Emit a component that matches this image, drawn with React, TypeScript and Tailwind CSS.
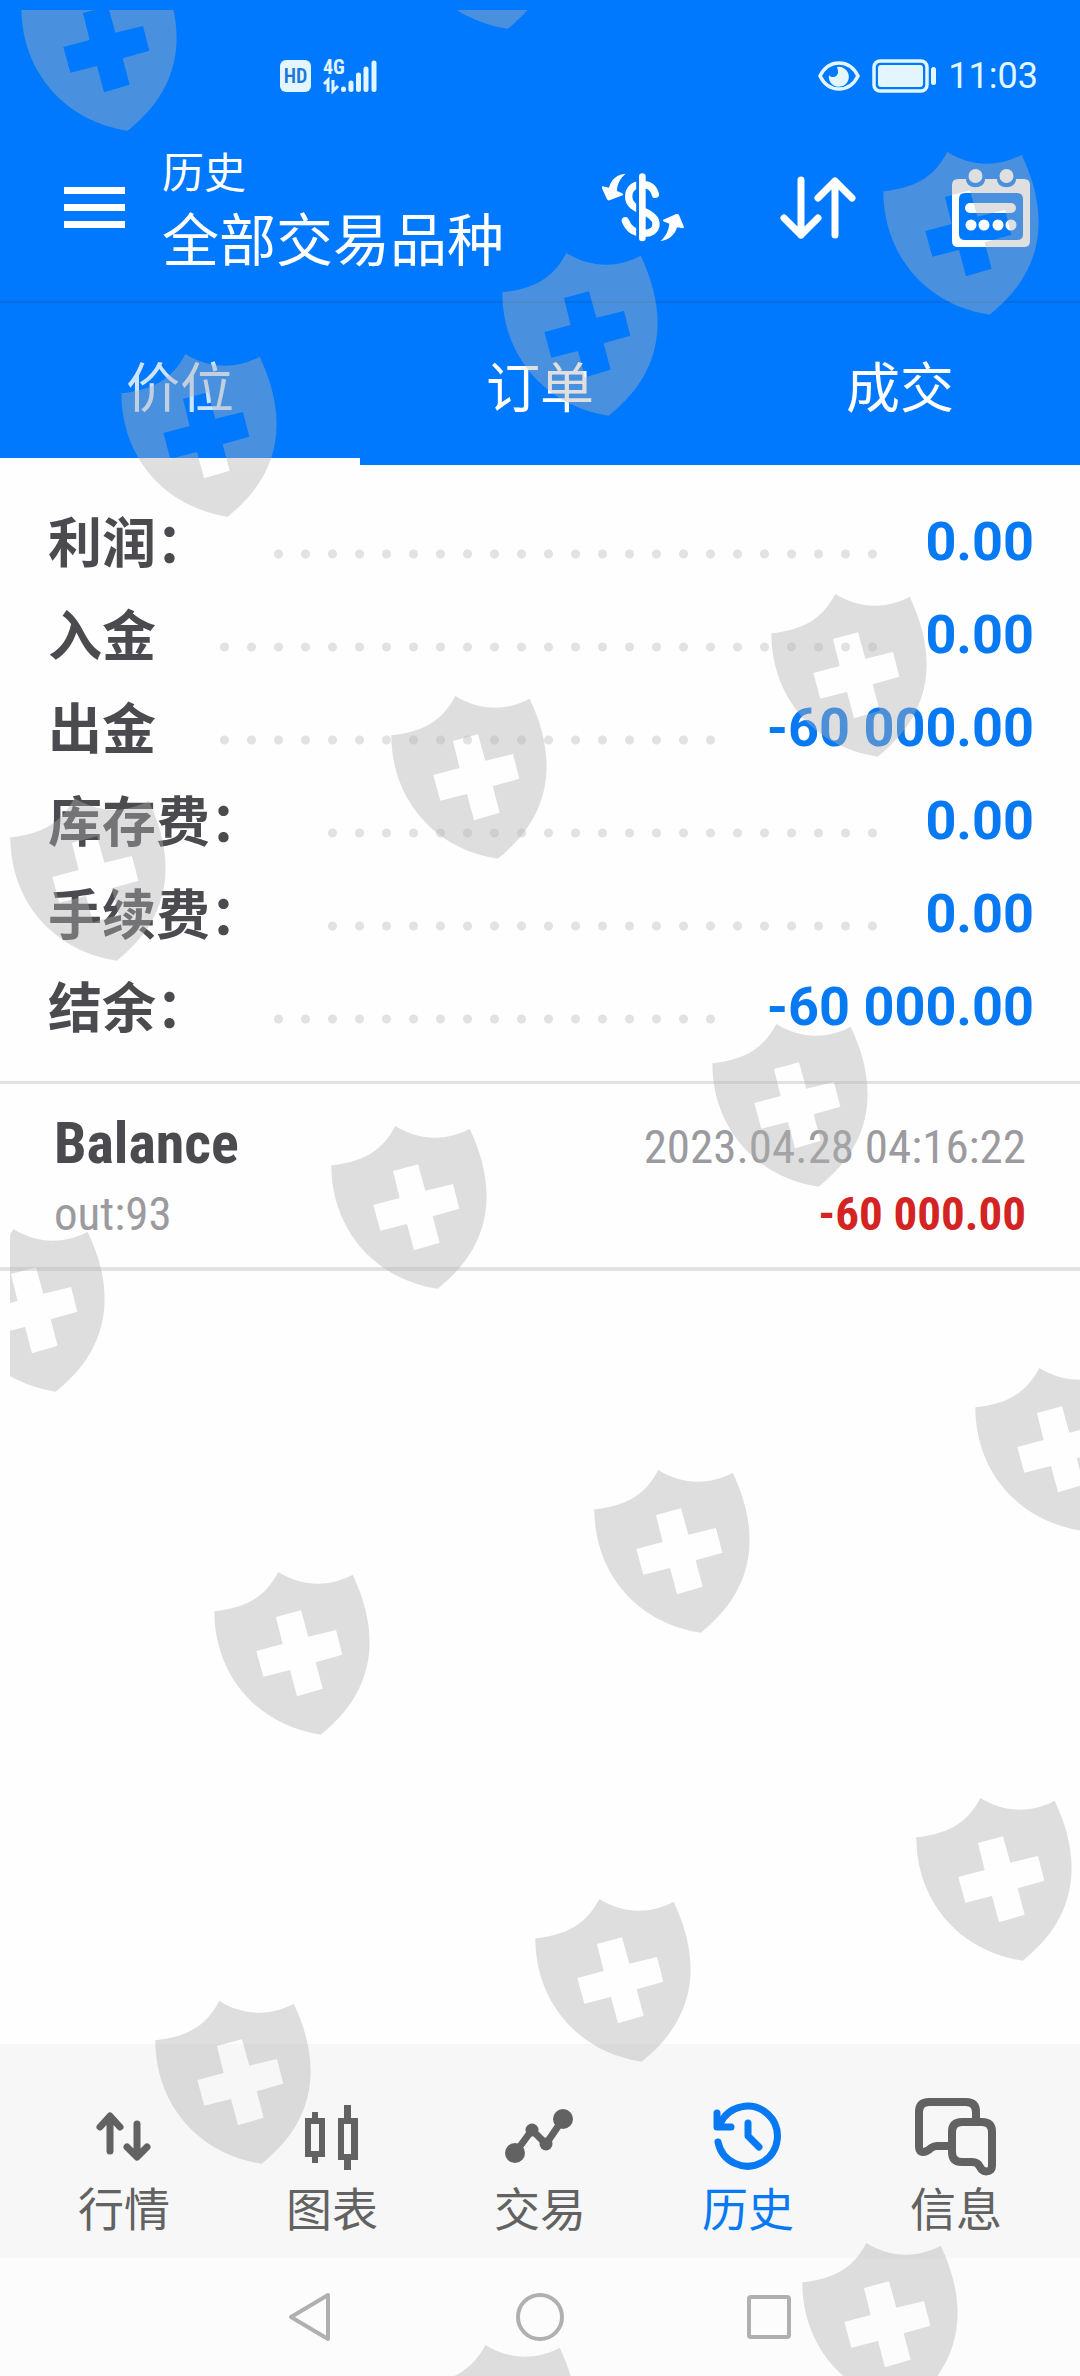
import type { ReactNode } from "react";

const summary = [
  { label: "利润：", value: "0.00" },
  { label: "入金", value: "0.00" },
  { label: "出金", value: "-60 000.00" },
  { label: "库存费：", value: "0.00" },
  { label: "手续费：", value: "0.00" },
  { label: "结余：", value: "-60 000.00" },
];

const shields = [
  [21, -32], [401, -134], [883, 152], [502, 253], [121, 354],
  [771, 594], [391, 696], [10, 798], [712, 1024], [331, 1126],
  [-51, 1229], [975, 1368], [594, 1470], [214, 1572], [916, 1798],
  [535, 1899], [155, 2001], [802, 2243], [421, 2345],
];

function StatusBar() {
  return (
    <div className="flex h-[112px] items-center pt-10 pr-[42px] pl-[280px] text-[#e3f6ff]">
      <svg width="104" height="48" viewBox="0 -6 104 48" aria-label="HD 4G" role="img">
        <rect x="0" y="2" width="31" height="32" rx="6" fill="currentColor" />
        <text x="15.5" y="25" fontFamily="Roboto Condensed, sans-serif" fontWeight="600" fontSize="20" textAnchor="middle" fill="#1a78dc">HD</text>
        <text x="43" y="16" fontFamily="Roboto Condensed, sans-serif" fontWeight="700" fontSize="20" fill="currentColor">4G</text>
        <path d="M48 34V22L44 26M53 22V33L58 28" stroke="currentColor" strokeWidth="3" fill="none" />
        <g stroke="currentColor" strokeWidth="5" strokeLinecap="round">
          <path d="M63.5 31V31.5M71 25V31.5M78.5 17V31.5M86 11V31.5M94 5V31.5" />
        </g>
      </svg>
      <div className="ml-auto flex items-center gap-3">
        <svg width="42" height="30" viewBox="0 0 42 30" aria-hidden="true">
          <path d="M2 15C6 7 13 2 21 2S36 7 40 15C36 23 29 28 21 28S6 23 2 15Z" fill="none" stroke="currentColor" strokeWidth="3.5" />
          <path d="M19 6A10 10 0 1 1 11 14C13 18 21 16 20 10C20 8 19 7 19 6Z" fill="currentColor" />
        </svg>
        <svg width="64" height="34" viewBox="0 0 64 34" aria-hidden="true">
          <rect x="2" y="2" width="53" height="30" rx="6" fill="none" stroke="currentColor" strokeWidth="3.5" />
          <rect x="6" y="6" width="45" height="22" rx="3" fill="currentColor" />
          <rect x="59" y="8" width="5" height="18" rx="2.5" fill="currentColor" />
        </svg>
        <span className="text-[36px] leading-[40px]">11:03</span>
      </div>
    </div>
  );
}

function DollarIcon() {
  return (
    <svg width="82" height="70" viewBox="21 27 246 210" aria-hidden="true">
      <path d="M181 91C176 70 160 61 140 61C114 61 101 78 101 98C101 122 122 132 142 141C168 151 183 162 183 180C183 200 166 210 142 208C118 206 100 194 91 170" fill="none" stroke="currentColor" strokeWidth="22" strokeLinecap="round" />
      <path d="M128 40V226" stroke="#0079ff" strokeWidth="9" />
      <path d="M142 38V222" stroke="currentColor" strokeWidth="20" strokeLinecap="round" />
      <path d="M92 29C66 31 48 46 42 71L23 67C20 67 20 70 21 73L36 106C38 110 42 110 46 108L83 94C86 92 84 89 80 87L66 81C66 60 76 42 92 29Z" fill="currentColor" />
      <path d="M196 231C222 229 240 212 246 190L264 193C267 193 267 190 266 187L252 153C250 149 246 149 242 151L205 167C202 169 204 171 208 173L223 179C221 200 212 218 196 231Z" fill="currentColor" />
    </svg>
  );
}

function SortIcon() {
  return (
    <svg width="76" height="64" viewBox="0 0 76 64" fill="none" stroke="currentColor" strokeWidth="7" strokeLinecap="round" strokeLinejoin="round" aria-hidden="true">
      <path d="M21 4V59M4 42L21 59L38 42M55 59V5M38 22L55 5L72 22" />
    </svg>
  );
}

function CalendarIcon() {
  return (
    <svg width="78" height="80" viewBox="0 0 78 80" fill="currentColor" aria-hidden="true">
      <path fillRule="evenodd" d="M6 11H14C14 22 33 22 33 11H45C45 22 64 22 64 11H72Q78 11 78 17V73Q78 79 72 79H6Q0 79 0 73V17Q0 11 6 11ZM13 25Q7 25 7 31V66Q7 72 13 72H65Q71 72 71 66V31Q71 25 65 25Z" />
      <circle cx="23.5" cy="8" r="7" />
      <circle cx="54.5" cy="8" r="7" />
      <rect x="13" y="35" width="51" height="10" rx="5" />
      <circle cx="19" cy="57" r="5.5" />
      <circle cx="32" cy="57" r="5.5" />
      <circle cx="46" cy="57" r="5.5" />
      <circle cx="59" cy="57" r="5.5" />
    </svg>
  );
}

function NavIcon({ children }: { children: ReactNode }) {
  return (
    <svg width="84" height="84" viewBox="0 0 84 84" fill="none" stroke="currentColor" strokeWidth="7" strokeLinecap="round" strokeLinejoin="round" aria-hidden="true">
      {children}
    </svg>
  );
}

const navItems = [
  {
    label: "行情",
    icon: <path d="M28 23V57M18 33L28 22L38 33M55 30V62M45 53L55 63L65 53" />,
  },
  {
    label: "图表",
    icon: (
      <g fill="currentColor" stroke="none" fillRule="evenodd">
        <path d="M22 18H28V24H35V63H28V69H22V63H15V24H22ZM21 30V57H29V30Z" />
        <path d="M54 11H61V24H68V66H61V76H54V66H48V24H54ZM54 30V60H61V30Z" />
      </g>
    ),
  },
  {
    label: "交易",
    icon: (
      <>
        <path d="M17 59L34 36L48 50L65 25" />
        <g fill="currentColor" stroke="none">
          <circle cx="17" cy="59" r="10" />
          <circle cx="34" cy="36" r="6.5" />
          <circle cx="48" cy="50" r="6.5" />
          <circle cx="65" cy="25" r="10" />
        </g>
      </>
    ),
  },
  {
    label: "历史",
    active: true,
    icon: (
      <>
        <path d="M12 48A30 30 0 1 0 14 30" />
        <path d="M11 19V33H25" />
        <path d="M42 29V42L53 53" />
      </>
    ),
  },
  {
    label: "信息",
    icon: (
      <g strokeWidth="8">
        <path d="M62 26V18Q62 8 52 8H15Q5 8 5 18V53C5 61 13 58 17 54Q20 52 23 52H34" />
        <path d="M48 28H68Q78 28 78 38V72C78 79 69 79 66 73Q64 68 58 68H48Q38 68 38 58V38Q38 28 48 28Z" />
      </g>
    ),
  },
];

function Shields() {
  return (
    <div className="pointer-events-none absolute top-[10px] right-0 bottom-0 left-[10px] overflow-hidden" aria-hidden="true">
      {shields.map(([x, y]) => (
        <svg key={`${x},${y}`} className="absolute h-[163px] w-[156px]" style={{ left: x - 10, top: y - 10 }} viewBox="0 0 466 489" fill="#b2b2b2" fillOpacity="0.41">
          <path fillRule="evenodd" d="M0 118C90 108 150 80 192 0C260 42 340 48 415 8C490 165 500 345 319 488C130 460 0 310 0 118ZM185 135L205 216L126 237L147 314L227 294L248 373L325 350L304 271L384 248L365 174L282 194L260 115Z" />
        </svg>
      ))}
    </div>
  );
}

export default function App() {
  return (
    <div lang="zh-CN" className="relative flex min-h-screen flex-col overflow-hidden bg-[#fefefe] font-[Roboto,'Noto_Sans_CJK_SC',sans-serif]">
      <header className="bg-[#0079ff] text-white">
        <StatusBar />
        <div className="flex h-[189px] items-center pt-[2px] pr-[50px] pl-16">
          <button type="button" aria-label="菜单" className="flex w-[61px] flex-col gap-[10px]">
            <span className="h-[7px] bg-white" />
            <span className="h-[7px] bg-white" />
            <span className="h-[7px] bg-white" />
          </button>
          <div className="ml-[37px] pt-1">
            <h1 className="text-[42px] leading-[64px]">历史</h1>
            <p className="text-[57px] leading-[72px]">全部交易品种</p>
          </div>
          <div className="ml-auto flex items-center gap-24">
            <button type="button" aria-label="货币"><DollarIcon /></button>
            <button type="button" aria-label="排序"><SortIcon /></button>
            <button type="button" aria-label="日期"><CalendarIcon /></button>
          </div>
        </div>
        <div role="tablist" className="flex h-[164px] border-t-2 border-[#066ee0] text-[54px]">
          <button type="button" role="tab" aria-selected="true" className="flex-1 border-b-[7px] border-white pt-[17px] text-white/80">价位</button>
          <button type="button" role="tab" aria-selected="false" className="flex-1 pt-[10px]">订单</button>
          <button type="button" role="tab" aria-selected="false" className="flex-1 pt-[10px]">成交</button>
        </div>
      </header>

      <main className="flex-1">
        <dl className="border-b-[3px] border-[#e2e2e2] pt-[30px] pr-[46px] pb-7 pl-12">
          {summary.map((row) => (
            <div key={row.label} className="flex h-[93px] items-center text-[54px] leading-[80px]">
              <dt className="pt-[6px] font-bold text-[#4a4a4f]">{row.label}</dt>
              <dd className="flex flex-1 items-center">
                <span className="mt-6 mr-[38px] ml-[55px] h-[10px] flex-1 bg-[radial-gradient(circle,#e2e2e2_4px,transparent_5px)] bg-[length:27px_10px] bg-repeat-x" />
                <span className="font-bold text-[#0779f2]">{row.value}</span>
              </dd>
            </div>
          ))}
        </dl>

        <article className="border-b-4 border-[#e2e2e2] pt-6 pr-[54px] pb-[21px] pl-[54px] font-['Roboto_Condensed',Roboto,sans-serif] text-[47px]">
          <div className="flex items-baseline justify-between leading-[70px]">
            <h2 className="text-[58px] font-bold text-[#4a4a4f]">Balance</h2>
            <time className="text-[#9b9b9f]">2023.04.28 04:16:22</time>
          </div>
          <div className="flex items-baseline justify-between leading-[64px]">
            <span className="text-[#9b9b9f]">out:93</span>
            <span className="font-bold text-[#d32323]">-60 000.00</span>
          </div>
        </article>
      </main>

      <nav className="flex h-[214px] bg-[#f7f7f7] px-5 pt-[50px] text-[#626262]">
        {navItems.map((item) => (
          <a key={item.label} href="#" aria-current={item.active ? "page" : undefined} className={item.active ? "flex flex-1 flex-col items-center text-[#0779f2]" : "flex flex-1 flex-col items-center"}>
            <NavIcon>{item.icon}</NavIcon>
            <span className="text-[46px] leading-[64px]">{item.label}</span>
          </a>
        ))}
      </nav>

      <div className="flex h-[118px] items-center justify-center gap-[180px] bg-[#fcfcfc] text-[#b0b0b0]">
        <button type="button" aria-label="返回">
          <svg width="50" height="50" viewBox="0 0 50 50" fill="none" stroke="currentColor" strokeWidth="4" strokeLinejoin="round"><path d="M43 3V47L6 25Z" /></svg>
        </button>
        <button type="button" aria-label="主页">
          <svg width="50" height="50" viewBox="0 0 50 50" fill="none" stroke="currentColor" strokeWidth="4"><circle cx="25" cy="25" r="22" /></svg>
        </button>
        <button type="button" aria-label="最近">
          <svg width="50" height="50" viewBox="0 0 50 50" fill="none" stroke="currentColor" strokeWidth="4"><rect x="4" y="5" width="40" height="40" rx="2" /></svg>
        </button>
      </div>

      <Shields />
    </div>
  );
}
